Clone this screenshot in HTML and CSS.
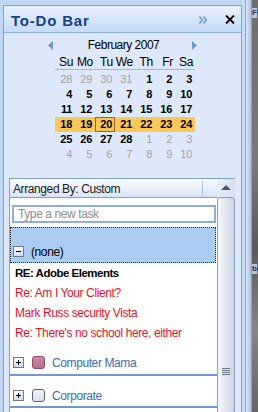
FILE: index.html
```html
<!DOCTYPE html>
<html>
<head>
<meta charset="utf-8">
<link rel="stylesheet" href="styles.css">
</head>
<body>
<div class="screen">
  <div class="panel">
    <div class="hdr">
      <span class="title">To-Do Bar</span>
      <svg class="chev" width="8" height="8" viewBox="0 0 8 8"><path d="M0.5 0.5 L3.5 4 L0.5 7.5 M4.5 0.5 L7.5 4 L4.5 7.5" fill="none" stroke="#6b8fc8" stroke-width="1.3"/></svg>
      <svg class="close" width="10" height="9" viewBox="0 0 10 9"><path d="M1 0.5 L9 8.5 M9 0.5 L1 8.5" stroke="#000" stroke-width="1.8"/></svg>
    </div>
    <div class="cal">
      <div class="month">
        <svg width="5" height="9" viewBox="0 0 5 9"><path d="M5 0 L0 4.5 L5 9 Z" fill="#6f95d2"/></svg>
        <span>February 2007</span>
        <svg width="5" height="9" viewBox="0 0 5 9"><path d="M0 0 L5 4.5 L0 9 Z" fill="#6f95d2"/></svg>
      </div>
      <div class="names"><span>Su</span><span>Mo</span><span>Tu</span><span>We</span><span>Th</span><span>Fr</span><span>Sa</span></div>
      <div class="wk"><span class="o">28</span><span class="o">29</span><span class="o">30</span><span class="o">31</span><span>1</span><span>2</span><span>3</span></div>
      <div class="wk"><span>4</span><span>5</span><span>6</span><span>7</span><span>8</span><span>9</span><span>10</span></div>
      <div class="wk"><span>11</span><span>12</span><span>13</span><span>14</span><span>15</span><span>16</span><span>17</span></div>
      <div class="wk sel"><span>18</span><span>19</span><span class="today">20</span><span>21</span><span>22</span><span>23</span><span>24</span></div>
      <div class="wk"><span>25</span><span>26</span><span>27</span><span>28</span><span class="o">1</span><span class="o">2</span><span class="o">3</span></div>
      <div class="wk"><span class="o">4</span><span class="o">5</span><span class="o">6</span><span class="o">7</span><span class="o">8</span><span class="o">9</span><span class="o">10</span></div>
    </div>
    <div class="tasks">
      <div class="tlist">
        <div class="arr"><span>Arranged By: Custom</span><i class="sep"></i></div>
        <div class="newtask"><div class="input">Type a new task</div></div>
        <div class="band"><div class="gh"><span class="pm"><i class="h"></i></span><span class="gname">(none)</span></div></div>
        <div class="item b">RE: Adobe Elements</div>
        <div class="item r">Re: Am I Your Client?</div>
        <div class="item r">Mark Russ security Vista</div>
        <div class="item r">Re: There's no school here, either</div>
        <div class="group g1"><div class="gh"><span class="pm"><i class="h"></i><i class="v"></i></span><span class="sq pink"></span><span class="gname blue">Computer Mama</span></div></div>
        <div class="group g2"><div class="gh"><span class="pm"><i class="h"></i><i class="v"></i></span><span class="sq gray"></span><span class="gname blue">Corporate</span></div></div>
      </div>
      <div class="scroll">
        <div class="up"><svg width="10" height="5" viewBox="0 0 10 5"><path d="M0 5 L5 0 L10 5 Z" fill="#475870"/></svg></div>
        <div class="thumb"><div class="grip"><i></i><i></i><i></i><i></i></div></div>
      </div>
    </div>
  </div>
  <div class="edge">
    <div class="e1"></div>
    <div class="e2"></div>
    <div class="e3"></div>
    <div class="e4"></div>
    <div class="e5"><span class="f1">F</span><span class="f2">b</span></div>
  </div>
</div>
</body>
</html>
```
FILE: styles.css
```css
html, body {
  margin: 0;
  padding: 0;
  width: 258px;
  height: 412px;
  overflow: hidden;
  background: #c0d8f5;
  font-family: "Liberation Sans", Arial, sans-serif;
  font-size: 12px;
  color: #000;
}
.screen {
  display: flex;
  height: 412px;
}
.panel {
  margin: 5px 0 0 3px;
  width: 237px;
  height: 420px;
  border: 1px solid #7da2ce;
  border-bottom: none;
  background: #dde9fb;
  display: flex;
  flex-direction: column;
  flex: none;
}
.hdr {
  height: 26px;
  border-bottom: 1px solid #8eb0dc;
  background: linear-gradient(#e8f1fd, #c5daf7);
  display: flex;
  align-items: center;
  padding-left: 7px;
}
.title {
  font-weight: bold;
  font-size: 15px;
  letter-spacing: 0.8px;
  color: #17408a;
  padding-top: 2px;
}
.chev {
  margin-left: auto;
  margin-top: 1px;
}
.close {
  margin: 1px 6px 0 18px;
}
.cal {
  padding-left: 51px;
  display: flex;
  flex-direction: column;
}
.month {
  margin: 5px 0 0 -7px;
  width: 149px;
  height: 15px;
  display: flex;
  align-items: center;
  justify-content: space-between;
  letter-spacing: -0.5px;
  line-height: 15px;
}
.month span { padding-left: 2px; }
.names {
  margin-top: 3px;
  width: 140px;
  height: 13px;
  line-height: 13px;
  border-bottom: 1px solid #9dbbe6;
  display: flex;
  letter-spacing: -0.3px;
}
.names span {
  width: 20px;
  text-align: right;
  padding-right: 2px;
  box-sizing: border-box;
}
.names + .wk { margin-top: 2px; }
.wk {
  width: 140px;
  height: 15px;
  display: flex;
  font-size: 11px;
  line-height: 15px;
  font-weight: bold;
  letter-spacing: -0.3px;
}
.wk span {
  width: 20px;
  text-align: right;
  padding-right: 3px;
  box-sizing: border-box;
}
.wk .o {
  font-weight: normal;
  color: #a2a2a2;
}
.wk.sel { background: #f9c75a; }
.wk .today { box-shadow: inset 0 0 0 1px #ad5a1e; }
.tasks {
  margin: 16px 0 0 5px;
  display: flex;
  flex: 1;
}
.tlist {
  width: 207px;
  border-left: 1px solid #7da2ce;
  background: #fff;
  display: flex;
  flex-direction: column;
  letter-spacing: -0.4px;
}
.arr {
  height: 18px;
  border-top: 1px solid #7da2ce;
  border-bottom: 1px solid #7da2ce;
  background: linear-gradient(#fafcff, #d6e5f8);
  display: flex;
  align-items: center;
  padding-left: 3px;
}
.arr span { padding-top: 2px; color: #1b1b1b; }
.sep {
  margin-left: auto;
  margin-right: 14px;
  width: 1px;
  height: 15px;
  background: #a6c3ea;
}
.newtask {
  padding: 7px 0 4px 2px;
}
.input {
  width: 196px;
  height: 14px;
  border: 2px solid #8caee0;
  padding-left: 4px;
  line-height: 14px;
  color: #8d8d8d;
}
.band {
  height: 31px;
  border: 1px dotted #2a2a2a;
  background: #a9cdf1;
  display: flex;
  align-items: flex-end;
  padding: 0 0 3px 2px;
  box-sizing: content-box;
  width: 202px;
}
.gh {
  height: 15px;
  display: flex;
  align-items: center;
}
.pm {
  position: relative;
  width: 9px;
  height: 9px;
  border: 1px solid #6b7b92;
  background: linear-gradient(#ffffff, #d3dbe7);
  flex: none;
}
.pm .h {
  position: absolute;
  left: 2px;
  top: 4px;
  width: 5px;
  height: 1px;
  background: #000;
}
.pm .v {
  position: absolute;
  left: 4px;
  top: 2px;
  width: 1px;
  height: 5px;
  background: #000;
}
.gname { margin-left: 7px; }
.item {
  height: 20px;
  line-height: 20px;
  padding-left: 5px;
  white-space: nowrap;
}
.item.b { font-weight: bold; font-size: 11.5px; letter-spacing: -0.5px; }
.item.r { color: #f0101f; }
.group {
  border-bottom: 2px solid #6f98d6;
  display: flex;
  align-items: flex-end;
  padding-left: 3px;
}
.g1 { height: 27px; padding-bottom: 4px; }
.g2 { height: 27px; padding-bottom: 3px; }
.sq {
  width: 11px;
  height: 11px;
  border: 1px solid;
  border-radius: 3px;
  margin-left: 8px;
  flex: none;
}
.sq.pink {
  border-color: #8c4666;
  background: linear-gradient(#d08aa8, #b5708f);
}
.sq.gray {
  border-color: #54657e;
  background: linear-gradient(#f1f3f7, #dde2ea);
}
.blue { color: #3a6bbd; }
.scroll {
  width: 18px;
  display: flex;
  flex-direction: column;
}
.up {
  height: 19px;
  background: linear-gradient(to right, #e9eef6, #d5dfee);
  border-top: 1px solid #7da2ce;
  display: flex;
  justify-content: center;
  padding-top: 6px;
  box-sizing: border-box;
}
.thumb {
  flex: 1;
  border: 1px solid #8d9eb8;
  border-radius: 3px;
  background: linear-gradient(to right, #f5f7fb, #e2e8f1 45%, #c8d2e0);
  display: flex;
  justify-content: center;
  padding-top: 170px;
}
.grip {
  display: flex;
  flex-direction: column;
  gap: 1px;
}
.grip i {
  display: block;
  width: 8px;
  height: 1px;
  background: #6b7890;
}
.edge {
  flex: 1;
  display: flex;
  height: 412px;
}
.e1 { width: 3px; background: #c6dbf5; }
.e2 { width: 1px; background: #8ea9cc; }
.e3 { width: 5px; background: linear-gradient(to right, #dfe9f6, #a9c0de); }
.e4 { width: 1px; background: #3bbfe4; }
.e5 {
  flex: 1;
  position: relative;
  background: linear-gradient(#6e6e6e, #7a7a7a 40%, #5a5a5a 60%, #858585 80%, #666);
  overflow: hidden;
}
.f1, .f2 {
  position: absolute;
  left: 0;
  font-size: 8px;
  font-weight: bold;
  color: #1d2d5a;
  background: #b9c8dc;
  line-height: 10px;
}
.f1 { top: 8px; }
.f2 { top: 264px; }
```
